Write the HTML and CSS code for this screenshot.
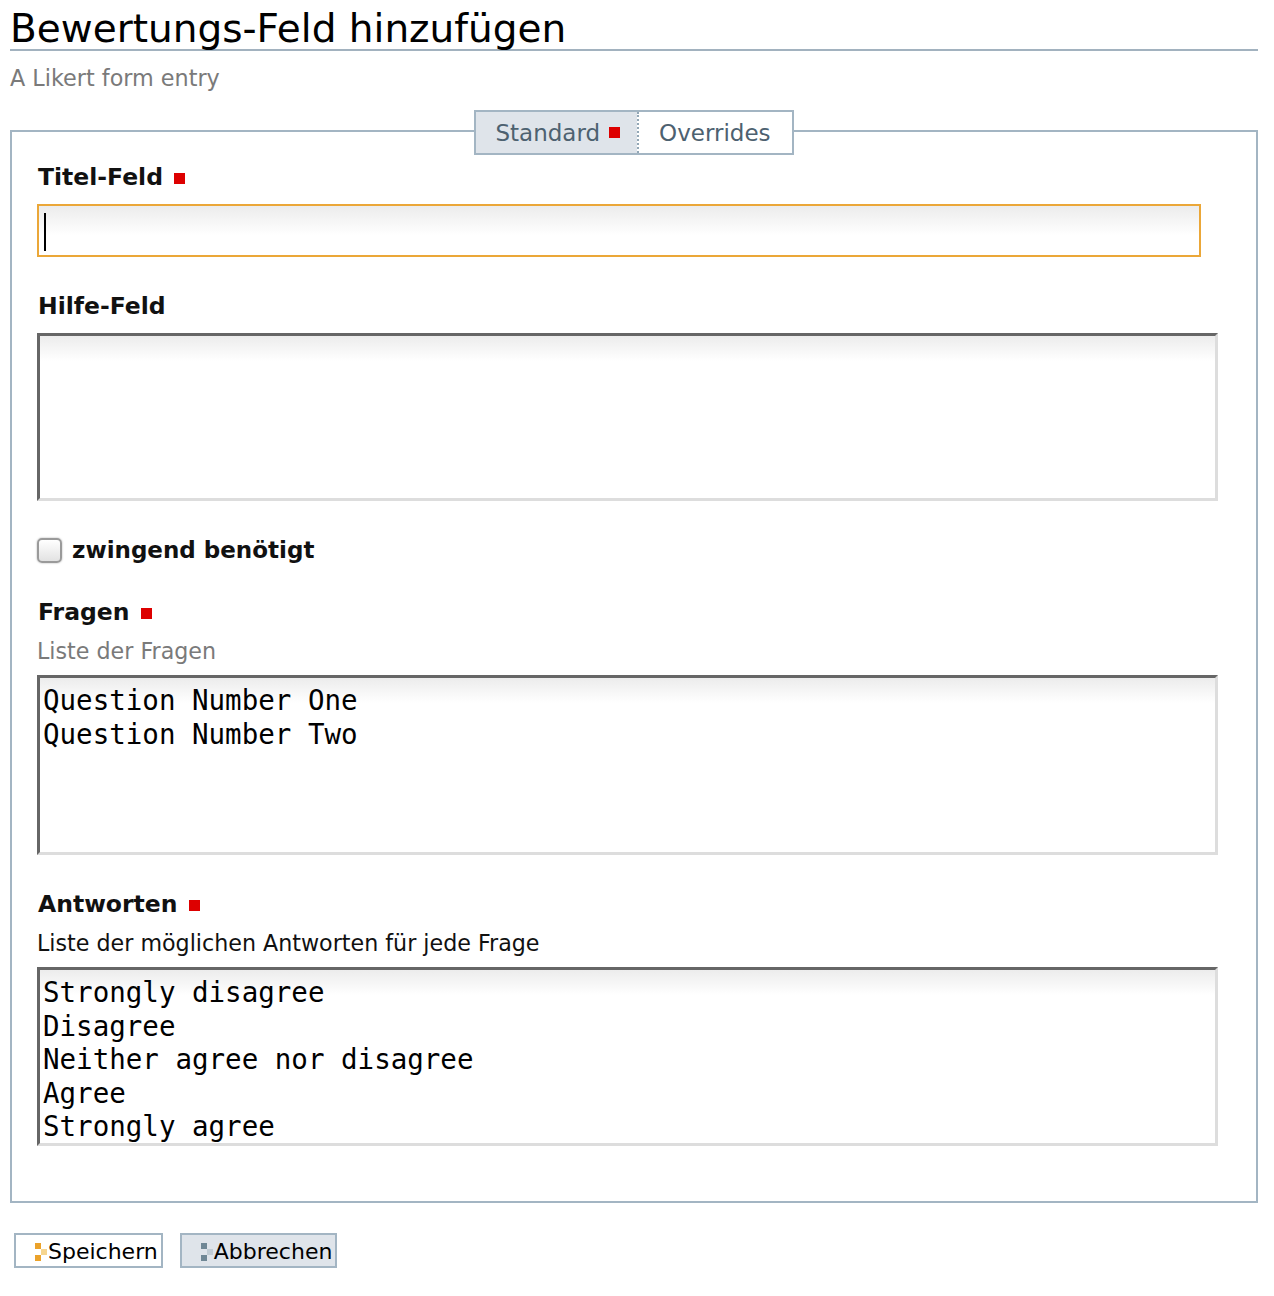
FILE: index.html
```html
<!DOCTYPE html>
<html lang="de">
<head>
<meta charset="utf-8">
<title>Bewertungs-Feld hinzufügen</title>
<link rel="stylesheet" href="styles.css">
</head>
<body>
<div class="page">
  <h1 class="title">Bewertungs-Feld hinzufügen</h1>
  <p class="subtitle">A Likert form entry</p>

  <div class="panel">
    <div class="tabs">
      <div class="tabset">
        <span class="tab tab-active">Standard<span class="req"></span></span>
        <span class="tab tab-other">Overrides</span>
      </div>
    </div>

    <div class="field">
      <div class="label">Titel-Feld<span class="req"></span></div>
      <div class="input-wrap">
        <input class="text-input" type="text" value="">
        <span class="caret"></span>
      </div>
    </div>

    <div class="field">
      <div class="label">Hilfe-Feld</div>
      <textarea class="area area-help"></textarea>
    </div>

    <div class="check-row">
      <span class="checkbox"></span>
      <span class="check-label">zwingend benötigt</span>
    </div>

    <div class="field">
      <div class="label">Fragen<span class="req"></span></div>
      <div class="help help-grey">Liste der Fragen</div>
      <textarea class="area area-q">Question Number One
Question Number Two</textarea>
    </div>

    <div class="field field-last">
      <div class="label">Antworten<span class="req"></span></div>
      <div class="help">Liste der möglichen Antworten für jede Frage</div>
      <textarea class="area area-a">Strongly disagree
Disagree
Neither agree nor disagree
Agree
Strongly agree</textarea>
    </div>
  </div>

  <div class="buttons">
    <button class="btn btn-save" type="button"><span class="ico ico-save"><i></i><i></i><i></i></span>Speichern</button>
    <button class="btn btn-cancel" type="button"><span class="ico ico-cancel"><i></i><i></i><i></i></span>Abbrechen</button>
  </div>
</div>
</body>
</html>
```

FILE: styles.css
```css
* { box-sizing: border-box; }

html, body {
  margin: 0;
  padding: 0;
  background: #ffffff;
}

body {
  font-family: "DejaVu Sans", "Noto Sans", sans-serif;
  color: #111;
}

.page {
  padding: 0 16px 40px 10px;
}

.title {
  margin: 0;
  padding-top: 8px;
  font-size: 39px;
  line-height: 41px;
  font-weight: normal;
  color: #000;
  border-bottom: 2px solid #a2b2bf;
}

.subtitle {
  margin: 12px 0 0 0;
  font-size: 22.3px;
  line-height: 30px;
  color: #7a7a7a;
}

.panel {
  margin-top: 37px;
  border: 2px solid #a3b5c3;
  padding: 0 0 55px 25px;
}

.tabs {
  display: flex;
  justify-content: center;
  margin-top: -22px;
  margin-left: -25px;
  margin-bottom: 7px;
}

.tabset {
  display: flex;
  height: 45px;
  border: 2px solid #a3b5c3;
  background: #fff;
}

.tab {
  display: flex;
  align-items: center;
  font-size: 23px;
  color: #4d6170;
  padding-top: 1px;
}

.tab-active {
  background: #dfe4ea;
  padding: 0 17px 0 19px;
}

.tab-active .req {
  margin-left: 9px;
}

.tab-other {
  background: #fff;
  border-left: 2px dotted #93a7b6;
  padding: 0 21px 0 20px;
}

.req {
  display: inline-block;
  width: 11px;
  height: 11px;
  background: #dd0000;
  margin-left: 11px;
  vertical-align: 1px;
}

.field {
  margin-bottom: 34px;
}

.field-last {
  margin-bottom: 0;
}

.label {
  font-size: 23.5px;
  font-weight: bold;
  line-height: 30px;
  color: #111;
  padding-left: 1px;
}

.help {
  margin-top: 12px;
  font-size: 22.2px;
  line-height: 24px;
  color: #111;
}

.help-grey {
  color: #7a7a7a;
}

.input-wrap {
  position: relative;
  margin-top: 12px;
  width: 1164px;
  height: 53px;
}

.text-input {
  display: block;
  width: 100%;
  height: 100%;
  border: 2px solid #eba738;
  background: linear-gradient(#ececec, #ffffff 60%);
  outline: none;
  font-family: "DejaVu Sans Mono", monospace;
  font-size: 27.5px;
  padding: 0 5px;
}

.caret {
  position: absolute;
  left: 7px;
  top: 9px;
  width: 2px;
  height: 38px;
  background: #000;
}

.area {
  display: block;
  margin-top: 12px;
  width: 1181px;
  border-style: solid;
  border-width: 3px;
  border-color: #666666 #dddddd #dddddd #666666;
  background: linear-gradient(#ececec, #ffffff 25px);
  font-family: "DejaVu Sans Mono", monospace;
  font-size: 27.5px;
  line-height: 33.5px;
  color: #000;
  padding: 6px 3px 4px 3px;
  resize: none;
  overflow: hidden;
  outline: none;
}

.area-help { height: 168px; }
.area-q { height: 180px; }
.area-a { height: 179px; }

.check-row {
  display: flex;
  align-items: center;
  height: 30px;
  margin-bottom: 32px;
}

.checkbox {
  display: inline-block;
  width: 25px;
  height: 25px;
  border: 2px solid #9a9a9a;
  border-radius: 5px;
  background: linear-gradient(#ffffff, #e2e2e2);
  box-shadow: 0 0 2px rgba(0,0,0,0.35);
  margin-right: 10px;
}

.check-label {
  font-size: 23px;
  font-weight: bold;
  color: #111;
}

.buttons {
  display: flex;
  gap: 17px;
  margin: 30px 0 0 4px;
}

.btn {
  display: flex;
  align-items: center;
  height: 35px;
  border: 2px solid #a3b5c3;
  font-family: "DejaVu Sans", sans-serif;
  font-size: 22px;
  color: #000;
  padding: 2px 3px 0 19px;
  cursor: pointer;
}

.btn-save { background: #ffffff; }
.btn-cancel { background: #dfe4ea; }

.ico {
  display: grid;
  grid-template-columns: 6px 6px;
  grid-template-rows: 6px 6px 6px;
  margin-right: 1px;
}

.ico i:nth-child(1) { grid-column: 1; grid-row: 1; }
.ico i:nth-child(2) { grid-column: 2; grid-row: 2; }
.ico i:nth-child(3) { grid-column: 1; grid-row: 3; }

.ico-save i:nth-child(1),
.ico-save i:nth-child(3) { background: #eba22a; }
.ico-save i:nth-child(2) { background: #f6d58f; }

.ico-cancel i:nth-child(1),
.ico-cancel i:nth-child(3) { background: #6f8795; }
.ico-cancel i:nth-child(2) { background: #c1ccd4; }
```
